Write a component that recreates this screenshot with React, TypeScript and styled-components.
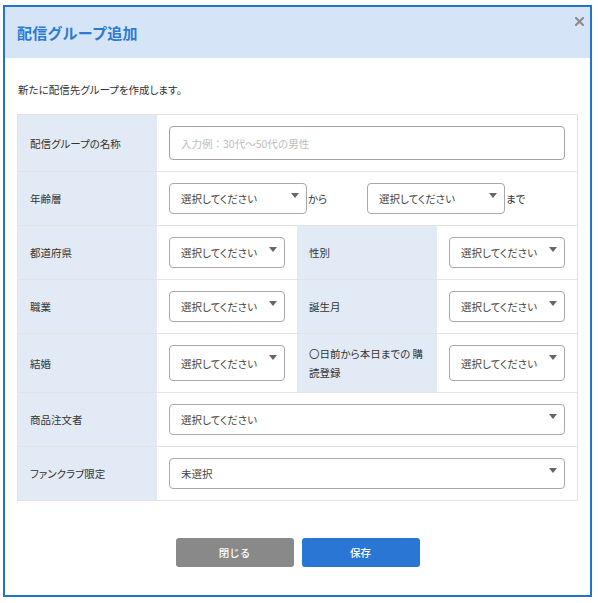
import React from "react";
import styled, { createGlobalStyle } from "styled-components";

const GlobalStyle = createGlobalStyle`
  html, body { margin: 0; padding: 0; background: #fff; }
  body {
    font-family: "Noto Sans CJK JP", "Noto Sans", sans-serif;
    color: #333;
  }
  * { box-sizing: border-box; }
`;

const Modal = styled.div`
  margin: 5px 0 0 3px;
  width: 589px;
  height: 592px;
  border: 2px solid #1f74cc;
  display: flex;
  flex-direction: column;
  background: #fff;
`;

const Header = styled.header`
  position: relative;
  height: 51px;
  flex: none;
  background: #d6e4f7;
  display: flex;
  align-items: center;
  padding-left: 12px;
`;

const Title = styled.h1`
  margin: 0;
  font-size: 15px;
  font-weight: 700;
  color: #2d7ad3;
  letter-spacing: 0.2px;
`;

const CloseButton = styled.button`
  position: absolute;
  right: 6px;
  top: 9px;
  width: 10px;
  height: 10px;
  padding: 0;
  border: none;
  background: none;
  display: flex;
  align-items: center;
  justify-content: center;
  cursor: pointer;
`;

const Body = styled.div`
  padding: 0 12px;
  display: flex;
  flex-direction: column;
`;

const Description = styled.p`
  margin: 25px 0 0 1px;
  font-size: 10.5px;
  line-height: 14px;
  color: #333;
  font-feature-settings: "palt";
`;

const Table = styled.div`
  margin-top: 17px;
  width: 561px;
  border: 1px solid #e3e3e3;
  display: flex;
  flex-direction: column;
`;

const Row = styled.div`
  display: grid;
  grid-template-columns: 139px 140px 140px 140px;
  & + & {
    border-top: 1px solid #e3e3e3;
  }
`;

const Label = styled.div`
  background: #e2ebf5;
  padding: 10px 12px;
  display: flex;
  align-items: center;
  font-size: 10.5px;
  line-height: 19px;
  color: #333;
  font-feature-settings: "palt";
`;

const Cell = styled.div<{ $span?: number }>`
  grid-column: span ${(p) => p.$span ?? 1};
  padding: 11px 12px;
  display: flex;
  align-items: stretch;
  background: #fff;
`;

const RangeGroup = styled.div`
  width: 198px;
  display: flex;
  align-items: center;
`;

const RangeText = styled.span`
  margin-left: 1px;
  font-size: 10.5px;
  color: #333;
  font-feature-settings: "palt";
`;

const SelectWrap = styled.div<{ $w?: string }>`
  position: relative;
  display: flex;
  width: ${(p) => p.$w ?? "100%"};
  flex: ${(p) => (p.$w ? "none" : "1")};
  align-self: ${(p) => (p.$w ? "center" : "stretch")};
`;

const Select = styled.select`
  appearance: none;
  -webkit-appearance: none;
  flex: 1;
  width: 100%;
  min-height: 31px;
  margin: 0;
  border: 1px solid #a9a9a9;
  border-radius: 4px;
  background: #fff;
  padding: 0 22px 0 11px;
  font-family: inherit;
  font-size: 10.5px;
  color: #444;
  font-feature-settings: "palt";
  outline: none;
`;

const Arrow = styled.span`
  position: absolute;
  right: 8px;
  top: 10px;
  width: 0;
  height: 0;
  border-left: 4px solid transparent;
  border-right: 4px solid transparent;
  border-top: 5px solid #666;
  pointer-events: none;
`;

const TextInput = styled.input`
  flex: 1;
  height: 34px;
  margin: 0;
  border: 1px solid #a3a3a3;
  border-radius: 4px;
  padding: 0 11px;
  font-family: inherit;
  font-size: 10.5px;
  color: #444;
  outline: none;
  &::placeholder {
    color: #bdbdbd;
  }
`;

const Footer = styled.div`
  margin-top: 37px;
  display: flex;
  justify-content: center;
  gap: 8px;
`;

const Button = styled.button<{ $primary?: boolean }>`
  width: 118px;
  height: 29px;
  border: none;
  border-radius: 3px;
  background: ${(p) => (p.$primary ? "#2a76d4" : "#898989")};
  color: #fff;
  font-family: inherit;
  font-size: 10.5px;
  font-weight: 500;
  cursor: pointer;
`;

type SelProps = { value?: string; w?: string };

const Dropdown: React.FC<SelProps> = ({ value = "選択してください", w }) => (
  <SelectWrap $w={w}>
    <Select defaultValue={value}>
      <option value={value}>{value}</option>
    </Select>
    <Arrow />
  </SelectWrap>
);

export default function App() {
  return (
    <>
      <GlobalStyle />
      <Modal>
        <Header>
          <Title>配信グループ追加</Title>
          <CloseButton aria-label="閉じる">
            <svg width="9" height="9" viewBox="0 0 9 9">
              <path d="M1 1 L8 8 M8 1 L1 8" stroke="#8a8a8a" strokeWidth="2" strokeLinecap="square" />
            </svg>
          </CloseButton>
        </Header>
        <Body>
          <Description>新たに配信先グループを作成します。</Description>
          <Table>
            <Row>
              <Label>配信グループの名称</Label>
              <Cell $span={3}>
                <TextInput placeholder="入力例：30代〜50代の男性" />
              </Cell>
            </Row>
            <Row>
              <Label>年齢層</Label>
              <Cell $span={3}>
                <RangeGroup>
                  <Dropdown w="138px" />
                  <RangeText>から</RangeText>
                </RangeGroup>
                <RangeGroup>
                  <Dropdown w="138px" />
                  <RangeText>まで</RangeText>
                </RangeGroup>
              </Cell>
            </Row>
            <Row>
              <Label>都道府県</Label>
              <Cell>
                <Dropdown />
              </Cell>
              <Label>性別</Label>
              <Cell>
                <Dropdown />
              </Cell>
            </Row>
            <Row>
              <Label>職業</Label>
              <Cell>
                <Dropdown />
              </Cell>
              <Label>誕生月</Label>
              <Cell>
                <Dropdown />
              </Cell>
            </Row>
            <Row>
              <Label>結婚</Label>
              <Cell>
                <Dropdown />
              </Cell>
              <Label>
                〇日前から本日までの 購<br />
                読登録
              </Label>
              <Cell>
                <Dropdown />
              </Cell>
            </Row>
            <Row>
              <Label>商品注文者</Label>
              <Cell $span={3}>
                <Dropdown />
              </Cell>
            </Row>
            <Row>
              <Label>ファンクラブ限定</Label>
              <Cell $span={3}>
                <Dropdown value="未選択" />
              </Cell>
            </Row>
          </Table>
          <Footer>
            <Button>閉じる</Button>
            <Button $primary>保存</Button>
          </Footer>
        </Body>
      </Modal>
    </>
  );
}
